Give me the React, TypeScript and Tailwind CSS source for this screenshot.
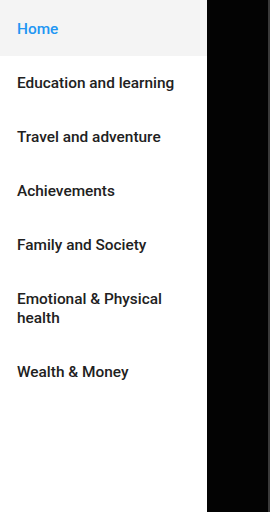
import React from 'react';

const items = [
  'Education and learning',
  'Travel and adventure',
  'Achievements',
  'Family and Society',
  'Emotional & Physical health',
  'Wealth & Money',
];

export default function App() {
  return (
    <div
      className="flex w-[270px] h-[512px] bg-black overflow-hidden"
      style={{ fontFamily: 'Roboto, "Noto Sans", sans-serif' }}
    >
      <nav className="w-[207px] h-full bg-white flex flex-col">
        <div className="bg-[#f4f4f4] px-[17px] pt-[20px] pb-[17px] text-[15.4px] leading-[19px] font-medium text-[#2196f3]">
          Home
        </div>
        {items.map((label) => (
          <div
            key={label}
            className="px-[17px] py-[17.5px] pr-[20px] text-[15.4px] leading-[19px] font-medium text-[#212121]"
          >
            {label}
          </div>
        ))}
      </nav>
      <div className="flex-1 h-full bg-[#030303]" />
      <div className="w-[2px] h-full bg-[#3a3a3a]" />
    </div>
  );
}
